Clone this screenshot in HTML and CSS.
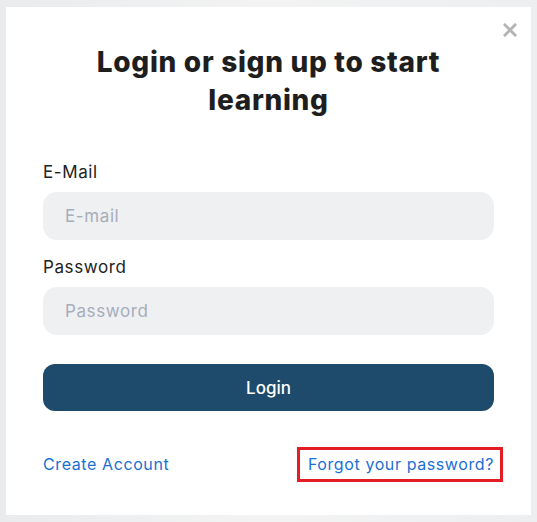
FILE: index.html
```html
<!DOCTYPE html>
<html lang="en">
<head>
    <meta charset="utf-8" />
    <title>Login</title>
    <link rel="stylesheet" href="styles.css">
</head>
<body>
    <div class="backdrop">
        <div class="modal">
            <button class="close" type="button" aria-label="Close">
                <svg width="14" height="14" viewBox="0 0 14 14">
                    <path d="M2 2 L12 12 M12 2 L2 12" stroke="#b4b4b4" stroke-width="3" stroke-linecap="square" />
                </svg>
            </button>
            <h1 class="title">Login or sign up to start learning</h1>

            <form class="form">
                <label class="label" for="email">E-Mail</label>
                <input class="field" id="email" type="text" placeholder="E-mail">

                <label class="label" for="password">Password</label>
                <input class="field" id="password" type="password" placeholder="Password">

                <button class="submit" type="button">Login</button>
            </form>

            <div class="links">
                <a href="#" class="link">Create Account</a>
                <a href="#" class="link highlight">Forgot your password?</a>
            </div>
        </div>
    </div>
</body>
</html>
```

FILE: styles.css
```css
html, body {
    margin: 0;
    padding: 0;
}

body {
    font-family: Inter, "Noto Sans", sans-serif;
    background: #eceef0;
    color: #222;
}

.backdrop {
    height: 522px;
    padding: 7px 6px;
    box-sizing: border-box;
    background: linear-gradient(90deg, #e9ebed 0%, #f3f3f3 50%, #eceef0 100%);
}

.modal {
    position: relative;
    background: #fff;
    height: 508px;
    box-sizing: border-box;
    padding: 36px 37px 0 37px;
}

.close {
    position: absolute;
    top: 16px;
    right: 14px;
    border: 0;
    background: none;
    padding: 0;
    cursor: pointer;
    line-height: 0;
}

.title {
    margin: 0 auto;
    width: 380px;
    text-align: center;
    font-size: 28px;
    line-height: 38px;
    font-weight: 800;
    letter-spacing: 0.7px;
    color: #1e1e1e;
}

.form {
    display: flex;
    flex-direction: column;
    margin-top: 41px;
}

.label {
    font-size: 17px;
    line-height: 24px;
    letter-spacing: 0.6px;
    margin-bottom: 8px;
}

.field {
    height: 48px;
    border: 0;
    border-radius: 14px;
    background: #eff0f2;
    padding: 0 22px;
    font-family: inherit;
    font-size: 17px;
    letter-spacing: 0.6px;
    margin-bottom: 15px;
    outline: none;
}

    .field::placeholder {
        color: #a6adbb;
    }

.submit {
    margin-top: 14px;
    height: 47px;
    border: 0;
    border-radius: 12px;
    background: #1e4b6b;
    color: #fff;
    font-family: inherit;
    font-size: 17px;
    font-weight: 500;
    cursor: pointer;
}

.links {
    display: flex;
    justify-content: space-between;
    align-items: center;
    margin-top: 43px;
}

.link {
    color: #1a6fd3;
    font-size: 16px;
    line-height: 21px;
    letter-spacing: 0.6px;
    text-decoration: none;
}

.highlight {
    border: 3px solid #e41d25;
    padding: 4px 6px 4px 8px;
    margin: -7px -9px -7px -11px;
}
```
